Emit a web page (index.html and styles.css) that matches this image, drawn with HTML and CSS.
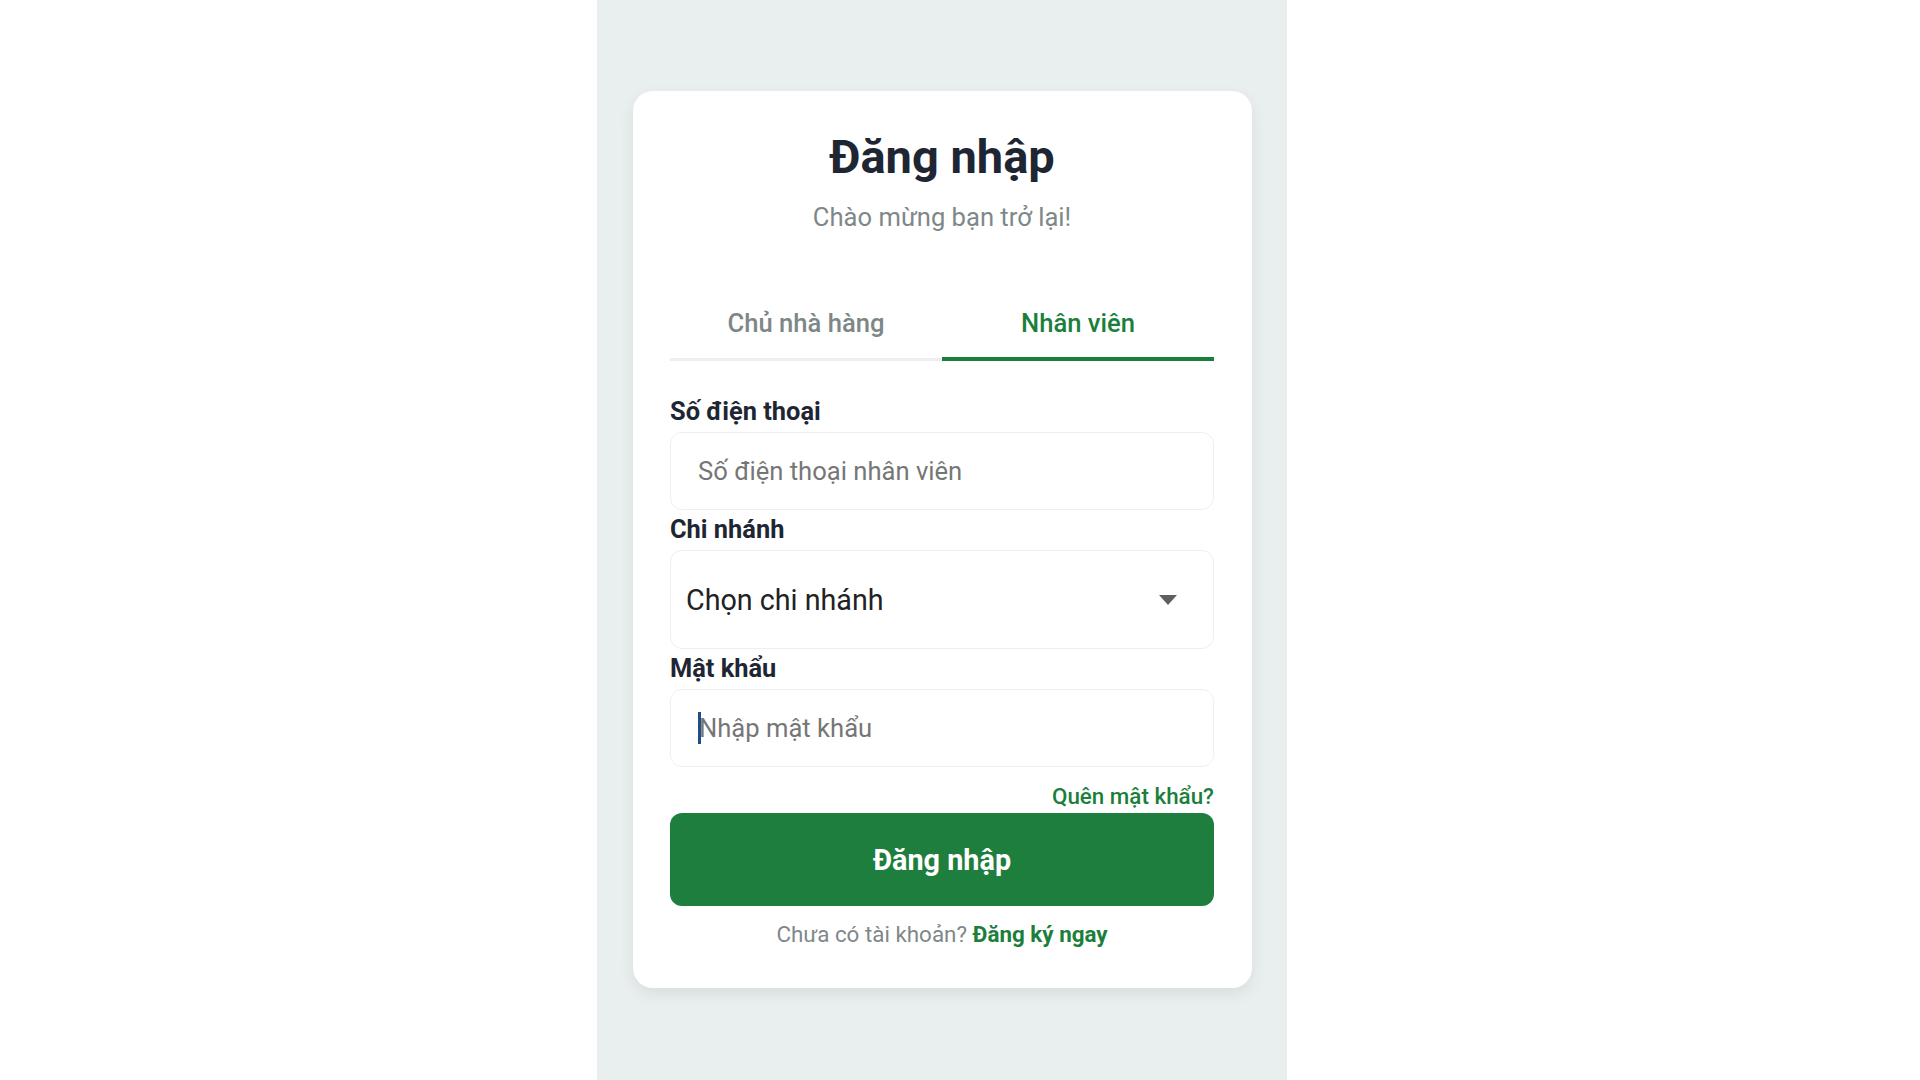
FILE: index.html
```html
<!DOCTYPE html>
<html lang="vi">
<head>
<meta charset="utf-8">
<title>Đăng nhập</title>
<link rel="stylesheet" href="styles.css">
</head>
<body>
<div class="page">
  <main class="card">
    <header class="head">
      <h1 class="title">Đăng nhập</h1>
      <p class="subtitle">Chào mừng bạn trở lại!</p>
    </header>
    <nav class="tabs">
      <div class="tab">Chủ nhà hàng</div>
      <div class="tab tab-active">Nhân viên</div>
    </nav>
    <form class="form">
      <div class="group">
        <label class="label">Số điện thoại</label>
        <div class="field"><span class="placeholder">Số điện thoại nhân viên</span></div>
      </div>
      <div class="group">
        <label class="label">Chi nhánh</label>
        <div class="select">
          <span class="select-text">Chọn chi nhánh</span>
          <svg class="arrow" width="18" height="10" viewBox="0 0 18 10"><path d="M0 0H18L9 10Z" fill="#5f5f5f"/></svg>
        </div>
      </div>
      <div class="group">
        <label class="label">Mật khẩu</label>
        <div class="field"><span class="caret"></span><span class="placeholder">Nhập mật khẩu</span></div>
      </div>
      <div class="forgot-row"><a class="forgot">Quên mật khẩu?</a></div>
      <button class="btn" type="button">Đăng nhập</button>
      <p class="footer">Chưa có tài khoản? <a class="signup">Đăng ký ngay</a></p>
    </form>
  </main>
</div>
</body>
</html>
```

FILE: styles.css
```css
* { box-sizing: border-box; }
html, body { margin: 0; padding: 0; background: #ffffff; }
body {
  font-family: Roboto, "Noto Sans", "Liberation Sans", sans-serif;
  height: 1080px;
  overflow: hidden;
}
.page {
  margin-left: 597px;
  width: 690px;
  height: 1080px;
  background: #e9eeee;
  padding: 91px 35px 0 36px;
}
.card {
  background: #ffffff;
  border-radius: 20px;
  box-shadow: 0 6px 16px rgba(0, 0, 0, 0.07);
  padding: 38px 38px 40px 37px;
}
.head { text-align: center; }
.title {
  margin: 0;
  font-size: 47px;
  line-height: 55px;
  font-weight: 700;
  color: #1f2633;
}
.subtitle {
  margin: 17px 0 0 0;
  font-size: 25.6px;
  line-height: 32px;
  color: #7f8889;
}
.tabs {
  display: flex;
  margin-top: 63px;
  border-bottom: 3px solid #eeeeee;
}
.tab {
  flex: 1;
  text-align: center;
  font-size: 25.6px;
  line-height: 32px;
  font-weight: 500;
  color: #7d8787;
  padding: 11px 0 18px;
  margin-bottom: -3px;
  border-bottom: 4px solid transparent;
}
.tab-active {
  color: #1b7f3b;
  border-bottom-color: #1b7f3b;
}
.form {
  margin: 34px 0 0 0;
  display: flex;
  flex-direction: column;
}
.group { margin-bottom: 3px; }
.label {
  display: block;
  font-size: 25.4px;
  line-height: 32px;
  font-weight: 700;
  color: #1f2633;
  margin-bottom: 5px;
}
.field {
  height: 78px;
  border: 1.5px solid #efefef;
  border-radius: 12px;
  display: flex;
  align-items: center;
  padding: 0 26px 0 27px;
  font-size: 25.6px;
}
.placeholder { color: #767676; }
.caret {
  width: 3px;
  height: 32px;
  background: #1c4f86;
  margin-right: -2px;
}
.select {
  height: 99px;
  border: 1.5px solid #efefef;
  border-radius: 12px;
  display: flex;
  align-items: center;
  justify-content: space-between;
  padding: 0 36px 0 15px;
}
.select-text {
  font-size: 28.7px;
  color: #222222;
}
.arrow { display: block; }
.forgot-row {
  display: flex;
  justify-content: flex-end;
  margin-top: 13px;
}
.forgot {
  font-size: 22.4px;
  line-height: 27px;
  font-weight: 500;
  color: #1b7f3b;
}
.btn {
  margin-top: 3px;
  height: 93px;
  border: none;
  border-radius: 12px;
  background: #1e7e3e;
  color: #ffffff;
  font-family: inherit;
  font-size: 28.8px;
  font-weight: 700;
}
.footer {
  margin: 14px 0 0 0;
  text-align: center;
  font-size: 22.4px;
  line-height: 28px;
  color: #7f8889;
}
.signup {
  font-weight: 700;
  color: #1b7f3b;
}
```
